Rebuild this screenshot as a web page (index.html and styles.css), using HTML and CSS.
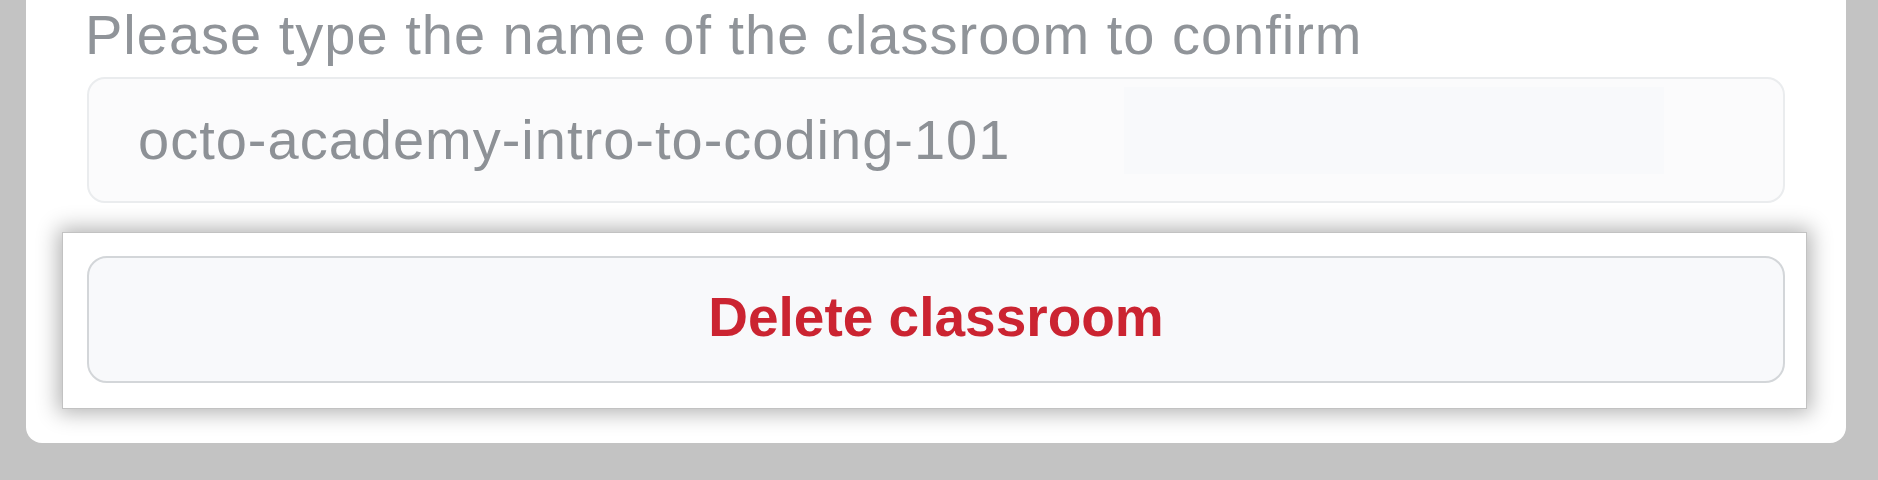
FILE: index.html
```html
<!DOCTYPE html>
<html lang="en">
<head>
<meta charset="utf-8">
<title>Delete classroom</title>
<link rel="stylesheet" href="styles.css">
</head>
<body>
  <div class="page">
    <div class="card">
      <label class="label" for="confirm">Please type the name of the classroom to confirm</label>
      <div class="field" id="confirm">
        <span class="field-text">octo-academy-intro-to-coding-101</span>
        <span class="ghost"></span>
      </div>
      <div class="highlight">
        <button class="btn-danger" type="button">Delete classroom</button>
      </div>
    </div>
  </div>
</body>
</html>
```
FILE: styles.css
```css
html, body {
  margin: 0;
  padding: 0;
  background: #c3c3c3;
  height: 100%;
}

.page {
  padding: 0 32px 0 26px;
  font-family: "Liberation Sans", Arial, sans-serif;
}

.card {
  background: #ffffff;
  border-radius: 0 0 16px 16px;
  padding: 3px 61px 34px 61px;
  display: flex;
  flex-direction: column;
}

.label {
  display: block;
  margin-left: -2px;
  font-size: 56px;
  line-height: 64px;
  letter-spacing: 1px;
  color: #909499;
}

.field {
  margin-top: 10px;
  height: 126px;
  box-sizing: border-box;
  border: 2px solid #eaecee;
  border-radius: 18px;
  background: #fbfbfc;
  display: flex;
  align-items: center;
  padding: 0 119px 0 49px;
}

.field-text {
  font-size: 56px;
  line-height: 64px;
  letter-spacing: 1px;
  color: #8d9196;
}

.ghost {
  margin-left: auto;
  align-self: flex-start;
  margin-top: 8px;
  width: 540px;
  height: 87px;
  background: #f8f9fb;
}

.highlight {
  margin: 29px -22px 0 -25px;
  padding: 23px 21px 25px 24px;
  background: #ffffff;
  border: 1px solid #c2c2c2;
  box-shadow: 0 0 20px 4px rgba(0, 0, 0, 0.3);
  display: flex;
  flex-direction: column;
}

.btn-danger {
  height: 127px;
  box-sizing: border-box;
  border: 2px solid #d3d6d9;
  border-radius: 20px;
  background: #f8f9fb;
  padding: 0 0 5px 0;
  margin: 0;
  font-family: "Liberation Sans", Arial, sans-serif;
  font-size: 55px;
  font-weight: 700;
  line-height: 64px;
  color: #cb2431;
  display: flex;
  align-items: center;
  justify-content: center;
}
```
